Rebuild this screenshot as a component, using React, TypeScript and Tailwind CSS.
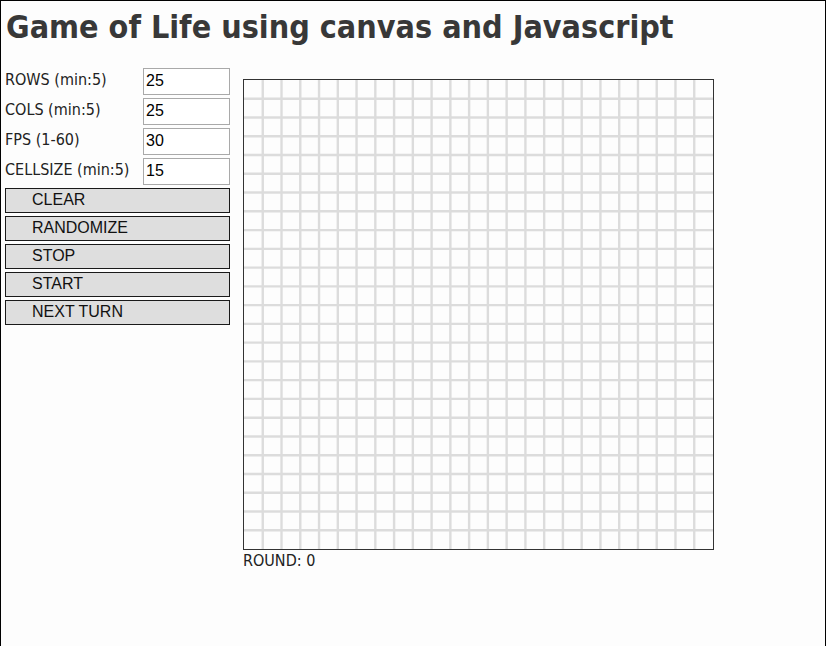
import React from 'react';

const ROWS = 25;
const SIZE = 469;

function Grid() {
  const step = SIZE / ROWS;
  const lines = [];
  for (let i = 1; i < ROWS; i++) {
    const p = i * step;
    lines.push(<line key={'v' + i} x1={p} y1={0} x2={p} y2={SIZE} stroke="#dcdcdc" strokeWidth={2.4} />);
    lines.push(<line key={'h' + i} x1={0} y1={p} x2={SIZE} y2={p} stroke="#dcdcdc" strokeWidth={2.4} />);
  }
  return (
    <svg width={SIZE} height={SIZE} className="block">
      <rect width={SIZE} height={SIZE} fill="#fdfdfd" />
      {lines}
    </svg>
  );
}

const fields = [
  { label: 'ROWS (min:5)', value: '25' },
  { label: 'COLS (min:5)', value: '25' },
  { label: 'FPS (1-60)', value: '30' },
  { label: 'CELLSIZE (min:5)', value: '15' },
];

const buttons = ['CLEAR', 'RANDOMIZE', 'STOP', 'START', 'NEXT TURN'];

export default function App() {
  return (
    <div className="w-[826px] h-[660px] border border-black bg-[#fdfdfd] text-[#222]" style={{ fontFamily: '"DejaVu Sans Condensed", "DejaVu Sans", sans-serif' }}>
      <h1 className="pl-[5px] pt-[6px] h-[58px] text-[32px] leading-[40px] font-bold text-[#383838]">
        Game of Life using canvas and Javascript
      </h1>
      <div className="flex pl-[4px] pt-[7px]">
        <div className="w-[225px] flex flex-col">
          {fields.map((f) => (
            <div key={f.label} className="flex items-center h-[30px]">
              <span className="w-[138px] text-[16px] leading-[20px] pb-[3px]">{f.label}</span>
              <input
                readOnly
                value={f.value}
                className="w-[87px] h-[27px] border border-[#a9a9a9] bg-white px-[2px] text-[16px] text-black outline-none"
                style={{ fontFamily: '"Liberation Sans", Arial, sans-serif' }}
              />
            </div>
          ))}
          <div className="flex flex-col gap-[3px] pt-[2px]">
            {buttons.map((b) => (
              <button
                key={b}
                className="h-[25px] w-[225px] border border-[#1a1a1a] bg-[#dedede] text-left pl-[26px] text-[16px] leading-[20px] pb-[2px] text-[#111]"
                style={{ fontFamily: '"Liberation Sans", Arial, sans-serif' }}
              >
                {b}
              </button>
            ))}
          </div>
        </div>
        <div className="ml-[13px] pt-[13px]">
          <div className="border border-[#333] w-[471px] h-[471px]">
            <Grid />
          </div>
          <div className="text-[16px] leading-[20px] pt-[1px]">ROUND: 0</div>
        </div>
      </div>
    </div>
  );
}
